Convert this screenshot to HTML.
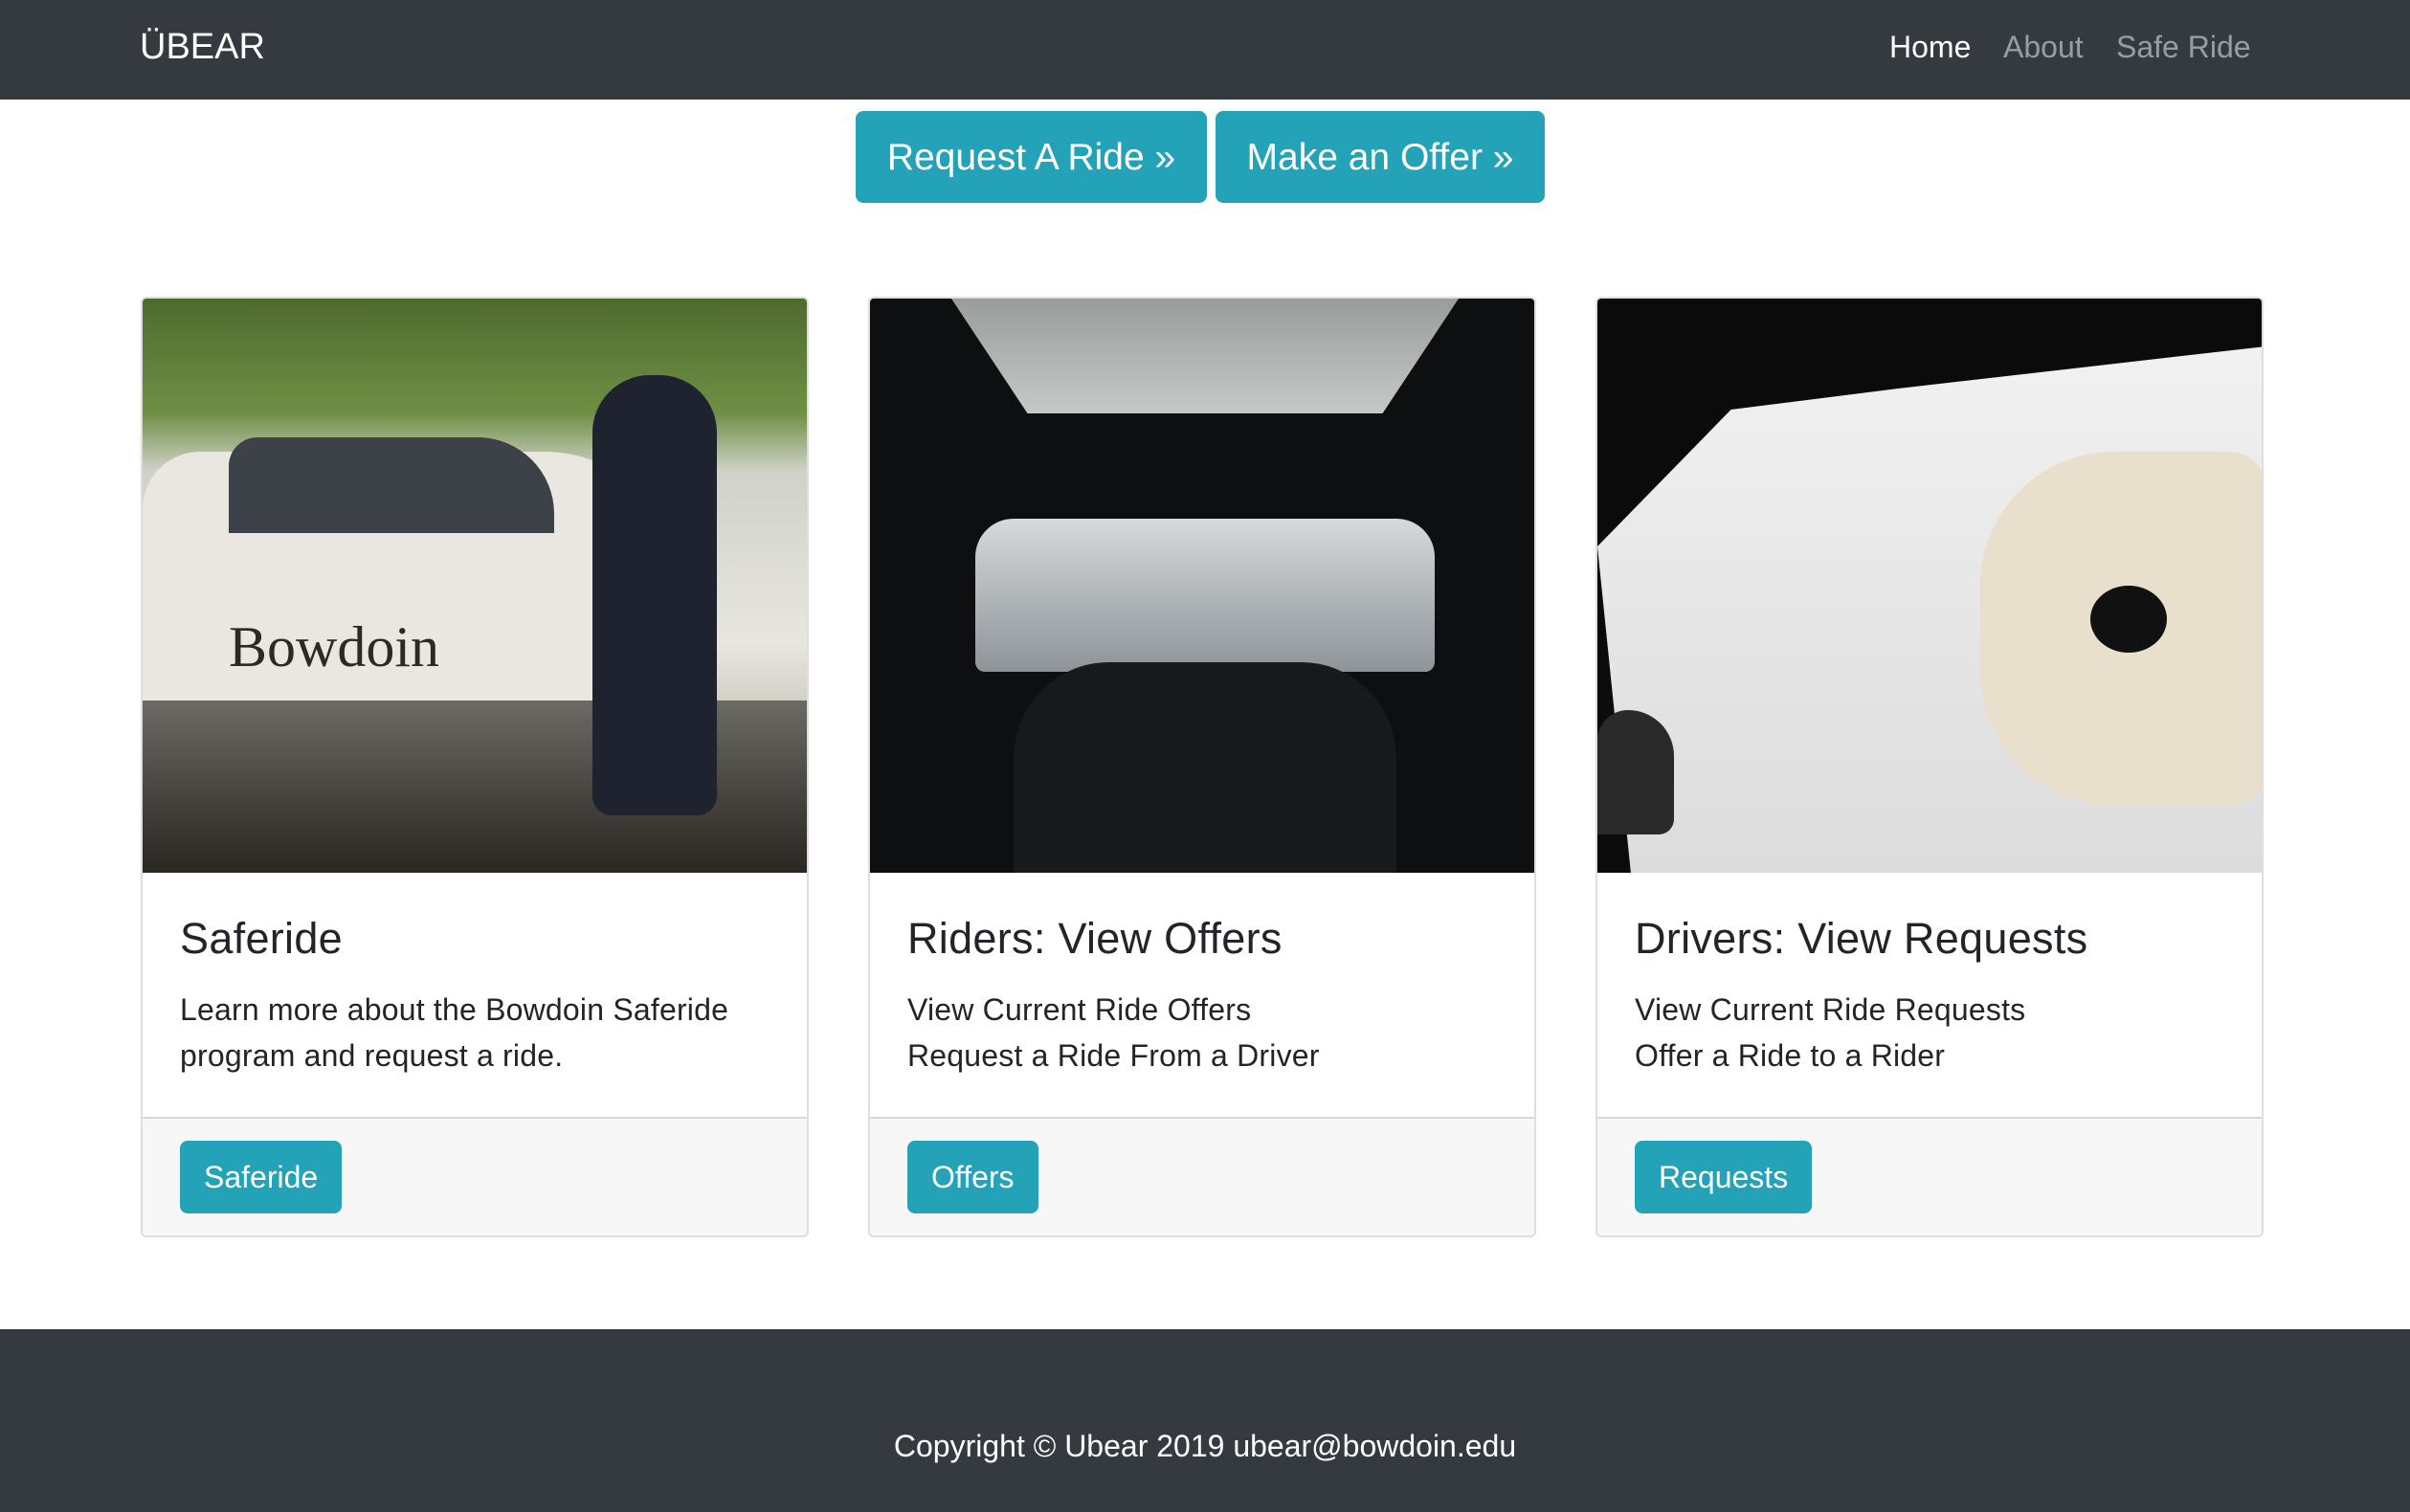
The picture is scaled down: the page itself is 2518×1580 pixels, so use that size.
<!DOCTYPE html>
<html><head><meta charset="utf-8"><style>
*{box-sizing:border-box;margin:0;padding:0}
body{width:2518px;height:1580px;background:#fff;font-family:"Liberation Sans",Helvetica,Arial,sans-serif;color:#212529;position:relative;overflow:hidden}
.nav{position:absolute;left:0;top:0;width:2518px;height:104px;background:#343a40}
.brand{position:absolute;left:146px;top:24px;font-size:38px;color:#fff;line-height:50px}
.nl{position:absolute;top:29px;font-size:32px;line-height:40px;color:rgba(255,255,255,.5)}
.btn{position:absolute;background:#24a3b8;color:#fff;border-radius:8px;text-align:center}
.top{top:116px;height:96px;font-size:39px;line-height:98px}
.card{position:absolute;top:310px;width:698px;height:983px;border:2px solid rgba(0,0,0,.13);border-radius:6px;overflow:hidden;background:#fff}
.img{position:absolute;left:0;top:0;width:100%;height:600px}
.title{position:absolute;left:39px;top:639px;font-size:45px;line-height:60px;font-weight:500;letter-spacing:0.3px}
.txt{position:absolute;left:39px;top:719px;font-size:32px;line-height:48px;letter-spacing:0.2px}
.cf{position:absolute;left:0;top:855px;width:100%;height:130px;background:#f7f7f7;border-top:2px solid rgba(0,0,0,.13)}
.cb{top:880px;height:76px;font-size:32px;line-height:76px;padding:0 25px;left:39px}
.foot{position:absolute;left:0;top:1389px;width:2518px;height:191px;background:#343a40;color:#fff;font-size:32px;text-align:center;line-height:40px;padding-top:102px}
</style></head><body>
<div class="nav">
<div class="brand">ÜBEAR</div>
<div class="nl" style="left:1974px;color:#fff">Home</div>
<div class="nl" style="left:2093px">About</div>
<div class="nl" style="left:2211px">Safe Ride</div>
</div>
<div class="btn top" style="left:894px;width:367px">Request A Ride »</div>
<div class="btn top" style="left:1270px;width:344px">Make an Offer »</div>

<div class="card" style="left:147px">
<div class="img" style="background:linear-gradient(180deg,#4e6b2e 0%,#6f8f45 20%,#cfd2c8 30%,#e8e6df 60%,#c9c5bb 75%,#3a3530 100%)">
<div style="position:absolute;left:0;top:160px;width:560px;height:300px;background:#e9e7e0;border-radius:60px 140px 0 0"></div>
<div style="position:absolute;left:90px;top:145px;width:340px;height:100px;background:#3c4248;border-radius:30px 80px 0 0"></div>
<div style="position:absolute;left:90px;top:330px;font-family:'Liberation Serif',serif;font-size:60px;color:#2d2a25">Bowdoin</div>
<div style="position:absolute;left:0;top:420px;width:100%;height:180px;background:linear-gradient(180deg,#6b6a65,#2a2622)"></div>
<div style="position:absolute;left:470px;top:80px;width:130px;height:460px;background:#1f2330;border-radius:60px 60px 20px 20px"></div>
</div>
<div class="title">Saferide</div>
<div class="txt">Learn more about the Bowdoin Saferide<br>program and request a ride.</div>
<div class="cf"></div>
<div class="btn cb">Saferide</div>
</div>

<div class="card" style="left:907px">
<div class="img" style="background:#0d0f10">
<div style="position:absolute;left:85px;top:0;width:530px;height:120px;background:linear-gradient(180deg,#9a9c9c,#c7c9c8);clip-path:polygon(0 0,100% 0,85% 100%,15% 100%)"></div>
<div style="position:absolute;left:110px;top:230px;width:480px;height:160px;background:linear-gradient(180deg,#d6dadc,#8e9398);border-radius:40px 40px 10px 10px"></div>
<div style="position:absolute;left:150px;top:380px;width:400px;height:220px;background:#17191b;border-radius:100px 100px 0 0"></div>
</div>
<div class="title">Riders: View Offers</div>
<div class="txt">View Current Ride Offers<br>Request a Ride From a Driver</div>
<div class="cf"></div>
<div class="btn cb">Offers</div>
</div>

<div class="card" style="left:1667px">
<div class="img" style="background:#0b0b0b">
<div style="position:absolute;left:0;top:50px;width:698px;height:550px;background:linear-gradient(180deg,#f1f1f1,#dcdcdc);clip-path:polygon(5% 100%,0 38%,20% 12%,45% 8%,100% 0,100% 100%)"></div>
<div style="position:absolute;left:400px;top:160px;width:300px;height:370px;background:#e8e0cc;border-radius:140px 40px 40px 140px"></div>
<div style="position:absolute;left:515px;top:300px;width:80px;height:70px;background:#111;border-radius:50%"></div>
<div style="position:absolute;left:0;top:430px;width:80px;height:130px;background:#2a2a2a;border-radius:40px 60px 20px 0"></div>
</div>
<div class="title">Drivers: View Requests</div>
<div class="txt">View Current Ride Requests<br>Offer a Ride to a Rider</div>
<div class="cf"></div>
<div class="btn cb">Requests</div>
</div>

<div class="foot">Copyright © Ubear 2019 ubear@bowdoin.edu</div>
</body></html>
